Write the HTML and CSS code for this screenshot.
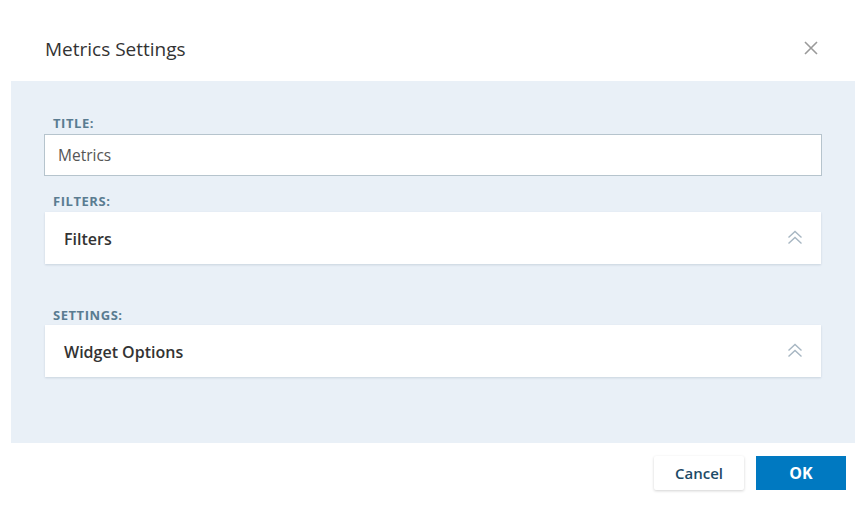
FILE: index.html
```html
<!DOCTYPE html>
<html>
<head>
<meta charset="utf-8">
<link rel="stylesheet" href="styles.css">
</head>
<body>
<div class="dialog">
  <div class="header">
    <div class="title">Metrics Settings</div>
    <svg class="close" width="14" height="14" viewBox="0 0 14 14">
      <path d="M1 1 L13 13 M13 1 L1 13" stroke="#9a9a9a" stroke-width="1.6" fill="none"/>
    </svg>
  </div>
  <div class="panel">
    <div class="label label-title">TITLE:</div>
    <div class="input">Metrics</div>
    <div class="label label-filters">FILTERS:</div>
    <div class="card">
      <span class="card-text">Filters</span>
      <svg class="chev" width="16" height="15" viewBox="0 0 16 15">
        <path d="M1.5 7.5 L8 1.5 L14.5 7.5 M1.5 13.5 L8 7.5 L14.5 13.5" stroke="#a7b6c2" stroke-width="1.4" fill="none"/>
      </svg>
    </div>
    <div class="label label-settings">SETTINGS:</div>
    <div class="card">
      <span class="card-text">Widget Options</span>
      <svg class="chev" width="16" height="15" viewBox="0 0 16 15">
        <path d="M1.5 7.5 L8 1.5 L14.5 7.5 M1.5 13.5 L8 7.5 L14.5 13.5" stroke="#a7b6c2" stroke-width="1.4" fill="none"/>
      </svg>
    </div>
  </div>
  <div class="footer">
    <button class="btn btn-cancel">Cancel</button>
    <button class="btn btn-ok">OK</button>
  </div>
</div>
</body>
</html>
```
FILE: styles.css
```css
* { box-sizing: border-box; }
html, body { margin: 0; padding: 0; background: #fff; }
body { font-family: "Open Sans", "Liberation Sans", sans-serif; width: 867px; height: 512px; overflow: hidden; }
.dialog { display: flex; flex-direction: column; padding: 0 12px 0 11px; }
.header {
  height: 81px;
  display: flex;
  justify-content: space-between;
  align-items: flex-start;
  padding: 37px 37px 0 34px;
}
.title { font-size: 19px; line-height: 24px; color: #333; }
.close { margin-top: 4px; }
.panel {
  background: #e9f0f7;
  height: 362px;
  padding: 0 33px;
  display: flex;
  flex-direction: column;
}
.label {
  font-size: 13px;
  line-height: 16px;
  font-weight: 700;
  color: #5a7c91;
  padding-left: 9px;
  letter-spacing: 0.55px;
}
.label-title { margin-top: 34px; margin-bottom: 3px; }
.label-filters { margin-top: 17px; margin-bottom: 3px; }
.label-settings { margin-top: 43px; margin-bottom: 2px; }
.input {
  height: 42px;
  border: 1px solid #b6c4cd;
  background: #fff;
  font-size: 15.5px;
  line-height: 40px;
  color: #555;
  padding-left: 13px;
}
.card {
  height: 52px;
  margin: 0 1px;
  background: #fff;
  box-shadow: 0 1px 2px rgba(120, 140, 160, 0.28);
  display: flex;
  align-items: center;
  justify-content: space-between;
  padding: 0 18px 0 19px;
}
.card-text { font-size: 16px; font-weight: 600; color: #333; margin-top: 1px; }
.chev { margin-top: -1px; }
.footer {
  display: flex;
  justify-content: flex-end;
  gap: 12px;
  padding: 13px 9px 0 0;
}
.btn {
  width: 90px;
  height: 34px;
  border: none;
  font-family: "Open Sans", "Liberation Sans", sans-serif;
  font-size: 15px;
  font-weight: 600;
  cursor: pointer;
}
.btn-cancel {
  background: #fff;
  color: #1d4a66;
  border-radius: 2px;
  box-shadow: 0 1px 3px rgba(0, 0, 0, 0.18);
}
.btn-ok {
  background: #0079c1;
  color: #fff;
  font-weight: 700;
  font-size: 16px;
}
```
